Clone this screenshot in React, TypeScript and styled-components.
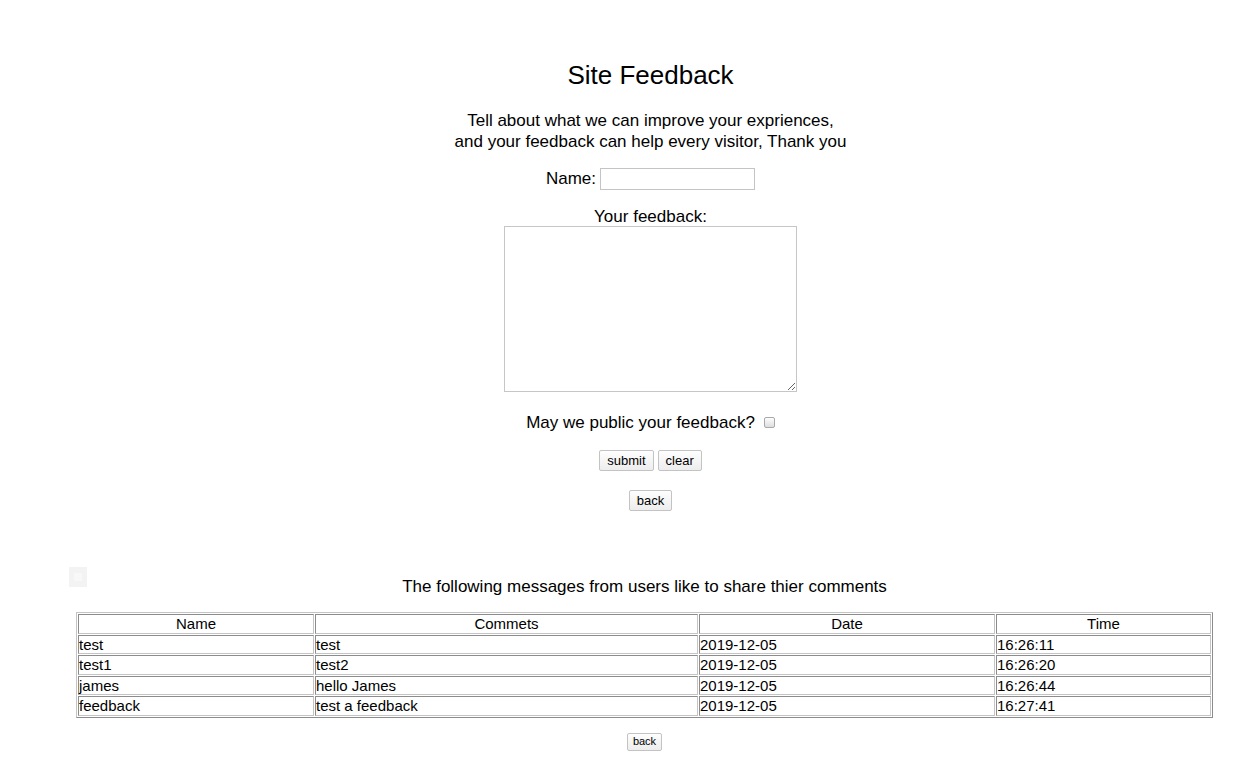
import styled, { createGlobalStyle } from "styled-components"

const GlobalStyle = createGlobalStyle`
  body {
    margin: 0;
    background: #fff;
    color: #000;
    font-family: "Liberation Sans", Arial, sans-serif;
  }
`

const Page = styled.div`
  width: 1253px;
  height: 768px;
  overflow: hidden;
`

const FormSection = styled.form`
  display: flex;
  flex-direction: column;
  align-items: center;
  padding: 59px 0 0 48px;
`

const Title = styled.h1`
  margin: 0;
  font-size: 26px;
  line-height: 32px;
  font-weight: normal;
`

const Intro = styled.p`
  margin: 19px 0 0;
  font-size: 17px;
  line-height: 21px;
  text-align: center;
`

const NameRow = styled.label`
  display: flex;
  align-items: center;
  gap: 4px;
  margin-top: 16px;
  font-size: 17px;
  line-height: 22px;
`

const TextInput = styled.input`
  box-sizing: border-box;
  width: 155px;
  height: 22px;
  margin: 0;
  border: 1px solid #c4c4c4;
  background: #fff;
`

const FieldLabel = styled.label`
  margin-top: 17px;
  font-size: 17px;
  line-height: 19px;
`

const FeedbackBox = styled.textarea`
  box-sizing: border-box;
  width: 293px;
  height: 166px;
  margin: 0;
  border: 1px solid #c6c6c6;
  background: #fff;
`

const CheckRow = styled.label`
  display: flex;
  align-items: center;
  gap: 9px;
  margin-top: 21px;
  font-size: 17px;
  line-height: 20px;
`

const Check = styled.input`
  appearance: none;
  box-sizing: border-box;
  width: 11px;
  height: 11px;
  margin: 0 0 2px;
  border: 1px solid #a9a9a9;
  border-radius: 2px;
  background: linear-gradient(#fdfdfd, #dedede);
`

const ButtonRow = styled.div<{ $top: number }>`
  display: flex;
  gap: 4px;
  margin-top: ${(p) => p.$top}px;
`

const Button = styled.button<{ $small?: boolean }>`
  box-sizing: border-box;
  height: ${(p) => (p.$small ? 18 : 21)}px;
  padding: 0 ${(p) => (p.$small ? 5 : 7)}px;
  border: 1px solid #c3c3c3;
  border-radius: 2px;
  background: linear-gradient(#fefefe, #ededed);
  color: #000;
  font-family: "Liberation Sans", Arial, sans-serif;
  font-size: ${(p) => (p.$small ? 11 : 13)}px;
  line-height: 1;
`

const MessagesSection = styled.section`
  position: relative;
  display: flex;
  flex-direction: column;
  align-items: center;
  padding: 66px 0 0 36px;
`

const Ghost = styled.div`
  position: absolute;
  left: 69px;
  top: 56px;
  width: 18px;
  height: 20px;
  background: #f3f3f3;

  &::after {
    content: "";
    position: absolute;
    left: 5px;
    top: 6px;
    width: 8px;
    height: 8px;
    background: #f8f8f8;
  }
`

const Heading = styled.h2`
  margin: 0;
  font-size: 17px;
  line-height: 20px;
  font-weight: normal;
`

const Table = styled.table`
  width: 1137px;
  margin-top: 15px;
  border: 1px solid;
  border-color: #c4c4c4 #8c8c8c #8c8c8c #c4c4c4;
  border-spacing: 1px;
  table-layout: fixed;
  font-size: 15px;
`

const HeadCell = styled.th`
  padding: 0;
  border: 1px solid;
  border-color: #8c8c8c #c4c4c4 #c4c4c4 #8c8c8c;
  font-weight: normal;
  line-height: 17.6px;
  text-align: center;
`

const Cell = styled.td`
  padding: 0;
  border: 1px solid;
  border-color: #8c8c8c #c4c4c4 #c4c4c4 #8c8c8c;
  line-height: 17.6px;
  white-space: nowrap;
`

const messages = [
  { name: "test", comment: "test", date: "2019-12-05", time: "16:26:11" },
  { name: "test1", comment: "test2", date: "2019-12-05", time: "16:26:20" },
  { name: "james", comment: "hello James", date: "2019-12-05", time: "16:26:44" },
  { name: "feedback", comment: "test a feedback", date: "2019-12-05", time: "16:27:41" },
]

const App = () => {
  return (
    <Page>
      <GlobalStyle />
      <FormSection onSubmit={(e) => e.preventDefault()}>
        <Title>Site Feedback</Title>
        <Intro>
          Tell about what we can improve your expriences,
          <br />
          and your feedback can help every visitor, Thank you
        </Intro>
        <NameRow>
          Name: <TextInput type="text" />
        </NameRow>
        <FieldLabel htmlFor="feedback">Your feedback:</FieldLabel>
        <FeedbackBox id="feedback" />
        <CheckRow>
          May we public your feedback? <Check type="checkbox" />
        </CheckRow>
        <ButtonRow $top={17}>
          <Button type="submit">submit</Button>
          <Button type="reset">clear</Button>
        </ButtonRow>
        <ButtonRow $top={19}>
          <Button type="button">back</Button>
        </ButtonRow>
      </FormSection>
      <MessagesSection>
        <Ghost />
        <Heading>The following messages from users like to share thier comments</Heading>
        <Table>
          <colgroup>
            <col style={{ width: 236 }} />
            <col style={{ width: 383 }} />
            <col style={{ width: 296 }} />
            <col />
          </colgroup>
          <thead>
            <tr>
              <HeadCell>Name</HeadCell>
              <HeadCell>Commets</HeadCell>
              <HeadCell>Date</HeadCell>
              <HeadCell>Time</HeadCell>
            </tr>
          </thead>
          <tbody>
            {messages.map((m) => (
              <tr key={m.time}>
                <Cell>{m.name}</Cell>
                <Cell>{m.comment}</Cell>
                <Cell>{m.date}</Cell>
                <Cell>{m.time}</Cell>
              </tr>
            ))}
          </tbody>
        </Table>
        <ButtonRow $top={15}>
          <Button type="button" $small>back</Button>
        </ButtonRow>
      </MessagesSection>
    </Page>
  )
}

export default App
